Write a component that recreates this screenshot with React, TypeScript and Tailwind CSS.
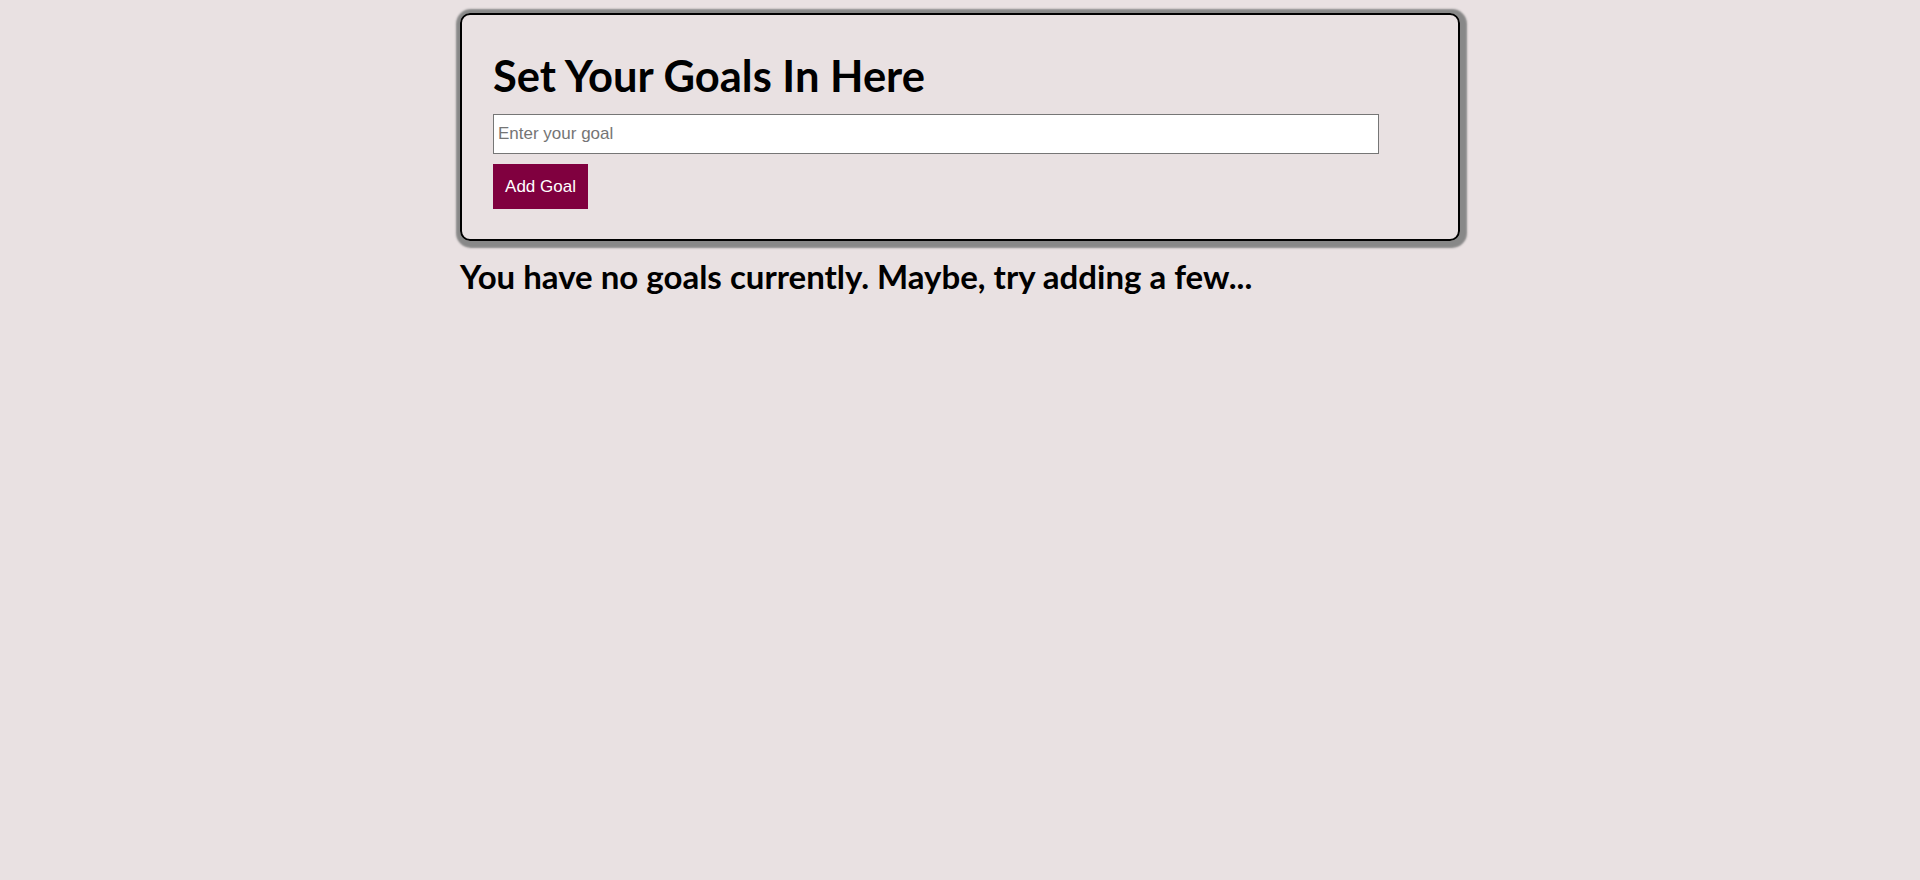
import React, { useState } from 'react'

export default function App() {
  const [goal, setGoal] = useState('')
  const [goals, setGoals] = useState<string[]>([])

  const addGoal = () => {
    if (!goal.trim()) return
    setGoals([...goals, goal.trim()])
    setGoal('')
  }

  return (
    <div className="min-h-screen bg-[#e9e1e2] pt-[13px]">
      <div className="w-[1000px] mx-auto">
        {/* Goal form */}
        <div className="border-2 border-black rounded-[10px] shadow-[1.5px_1.5px_2px_5px_#888] px-[31px] pt-[34px] pb-[30px]">
          <h1 className="text-[43.5px] leading-[53px] font-bold text-black mb-[12px] font-['Lato',sans-serif]">
            Set Your Goals In Here
          </h1>
          <input
            value={goal}
            onChange={(e) => setGoal(e.target.value)}
            placeholder="Enter your goal"
            className="block w-[886px] h-[40px] bg-white border border-[#767676] px-[4px] text-[17px] text-black placeholder:text-[#757575] outline-none font-['Liberation_Sans',Arial,sans-serif]"
          />
          <button
            onClick={addGoal}
            className="block mt-[10px] w-[95px] h-[45px] bg-[#80003f] text-white text-[17px] font-['Liberation_Sans',Arial,sans-serif]"
          >
            Add Goal
          </button>
        </div>

        {/* Goal list */}
        {goals.length === 0 ? (
          <h2 className="mt-[15px] text-[33px] leading-[40px] font-bold text-black font-['Lato',sans-serif]">
            You have no goals currently. Maybe, try adding a few...
          </h2>
        ) : (
          <ul className="mt-[15px] space-y-2">
            {goals.map((g, i) => (
              <li key={i} className="text-[20px] font-['Lato',sans-serif]">{g}</li>
            ))}
          </ul>
        )}
      </div>
    </div>
  )
}
